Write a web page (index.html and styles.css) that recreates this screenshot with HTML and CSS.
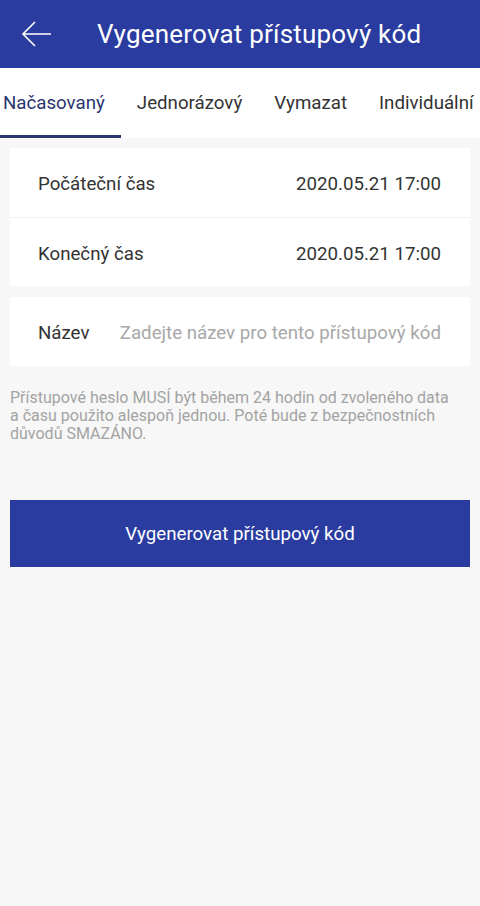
FILE: index.html
```html
<!DOCTYPE html>
<html lang="cs">
<head>
  <meta charset="UTF-8" />
  <meta name="viewport" content="width=device-width, initial-scale=1.0"/>
  <title>Vygenerovat přístupový kód</title>
  <link rel="stylesheet" href="styles.css">
</head>
<body>
  <div class="header">
    <svg class="back" width="32" height="28" viewBox="0 0 32 28">
      <path d="M30 14H2M14 2L2 14L14 26" fill="none" stroke="#fff" stroke-width="1.6" />
    </svg>
    <div class="title">Vygenerovat přístupový kód</div>
  </div>

  <div class="tabs">
    <div class="tab active">Načasovaný</div>
    <div class="tab">Jednorázový</div>
    <div class="tab">Vymazat</div>
    <div class="tab">Individuální</div>
  </div>

  <div class="card first">
    <div class="row">
      <span>Počáteční čas</span>
      <span>2020.05.21 17:00</span>
    </div>
    <div class="row">
      <span>Konečný čas</span>
      <span>2020.05.21 17:00</span>
    </div>
  </div>

  <div class="card">
    <div class="row name-row">
      <span>Název</span>
      <input type="text" class="name-input" placeholder="Zadejte název pro tento přístupový kód" />
    </div>
  </div>

  <p class="note">Přístupové heslo MUSÍ být během 24 hodin od zvoleného data a času použito alespoň jednou. Poté bude z bezpečnostních důvodů SMAZÁNO.</p>

  <button class="generate">Vygenerovat přístupový kód</button>
</body>
</html>
```

FILE: styles.css
```css
body {
  margin: 0;
  background-color: #f7f7f7;
  font-family: Roboto, 'Noto Sans', sans-serif;
  color: #333;
}

.header {
  height: 68px;
  background-color: #2a3c9f;
  display: flex;
  align-items: center;
  color: white;
}

.back {
  margin-left: 21px;
  margin-right: 44px;
}

.title {
  font-size: 26px;
  letter-spacing: 0.2px;
}

.tabs {
  height: 70px;
  background-color: white;
  display: flex;
  align-items: stretch;
  white-space: nowrap;
  overflow: hidden;
}

.tab {
  font-size: 18.7px;
  color: #333;
  display: flex;
  align-items: center;
  padding: 2px 16px 0;
  box-sizing: border-box;
  border-bottom: 3px solid transparent;
}

.tab:first-child {
  padding-left: 3px;
}

.tab.active {
  color: #2a3570;
  border-bottom-color: #2a3570;
}

.card {
  background-color: white;
  margin: 11px 10px 0;
}

.card.first {
  margin-top: 10px;
}

.row {
  height: 69px;
  display: flex;
  justify-content: space-between;
  align-items: center;
  padding: 3px 29px 0 28px;
  box-sizing: border-box;
  font-size: 18.7px;
  color: #333;
}

.row + .row {
  border-top: 1px solid #f0f0f0;
}

.name-row {
  justify-content: flex-start;
}

.name-input {
  flex: 1;
  min-width: 0;
  border: none;
  outline: none;
  margin-left: 20px;
  padding: 0;
  font-family: inherit;
  font-size: 18.7px;
  text-align: right;
  color: #333;
  background: transparent;
}

.name-input::placeholder {
  color: #a8a8a8;
}

.note {
  margin: 23px 20px 0 10px;
  font-size: 16px;
  line-height: 18px;
  color: #a3a3a3;
}

.generate {
  display: block;
  width: 460px;
  height: 67px;
  margin: 57px 10px 0;
  background-color: #2a3c9f;
  color: white;
  border: none;
  font-family: inherit;
  font-size: 18.7px;
  cursor: pointer;
}
```
